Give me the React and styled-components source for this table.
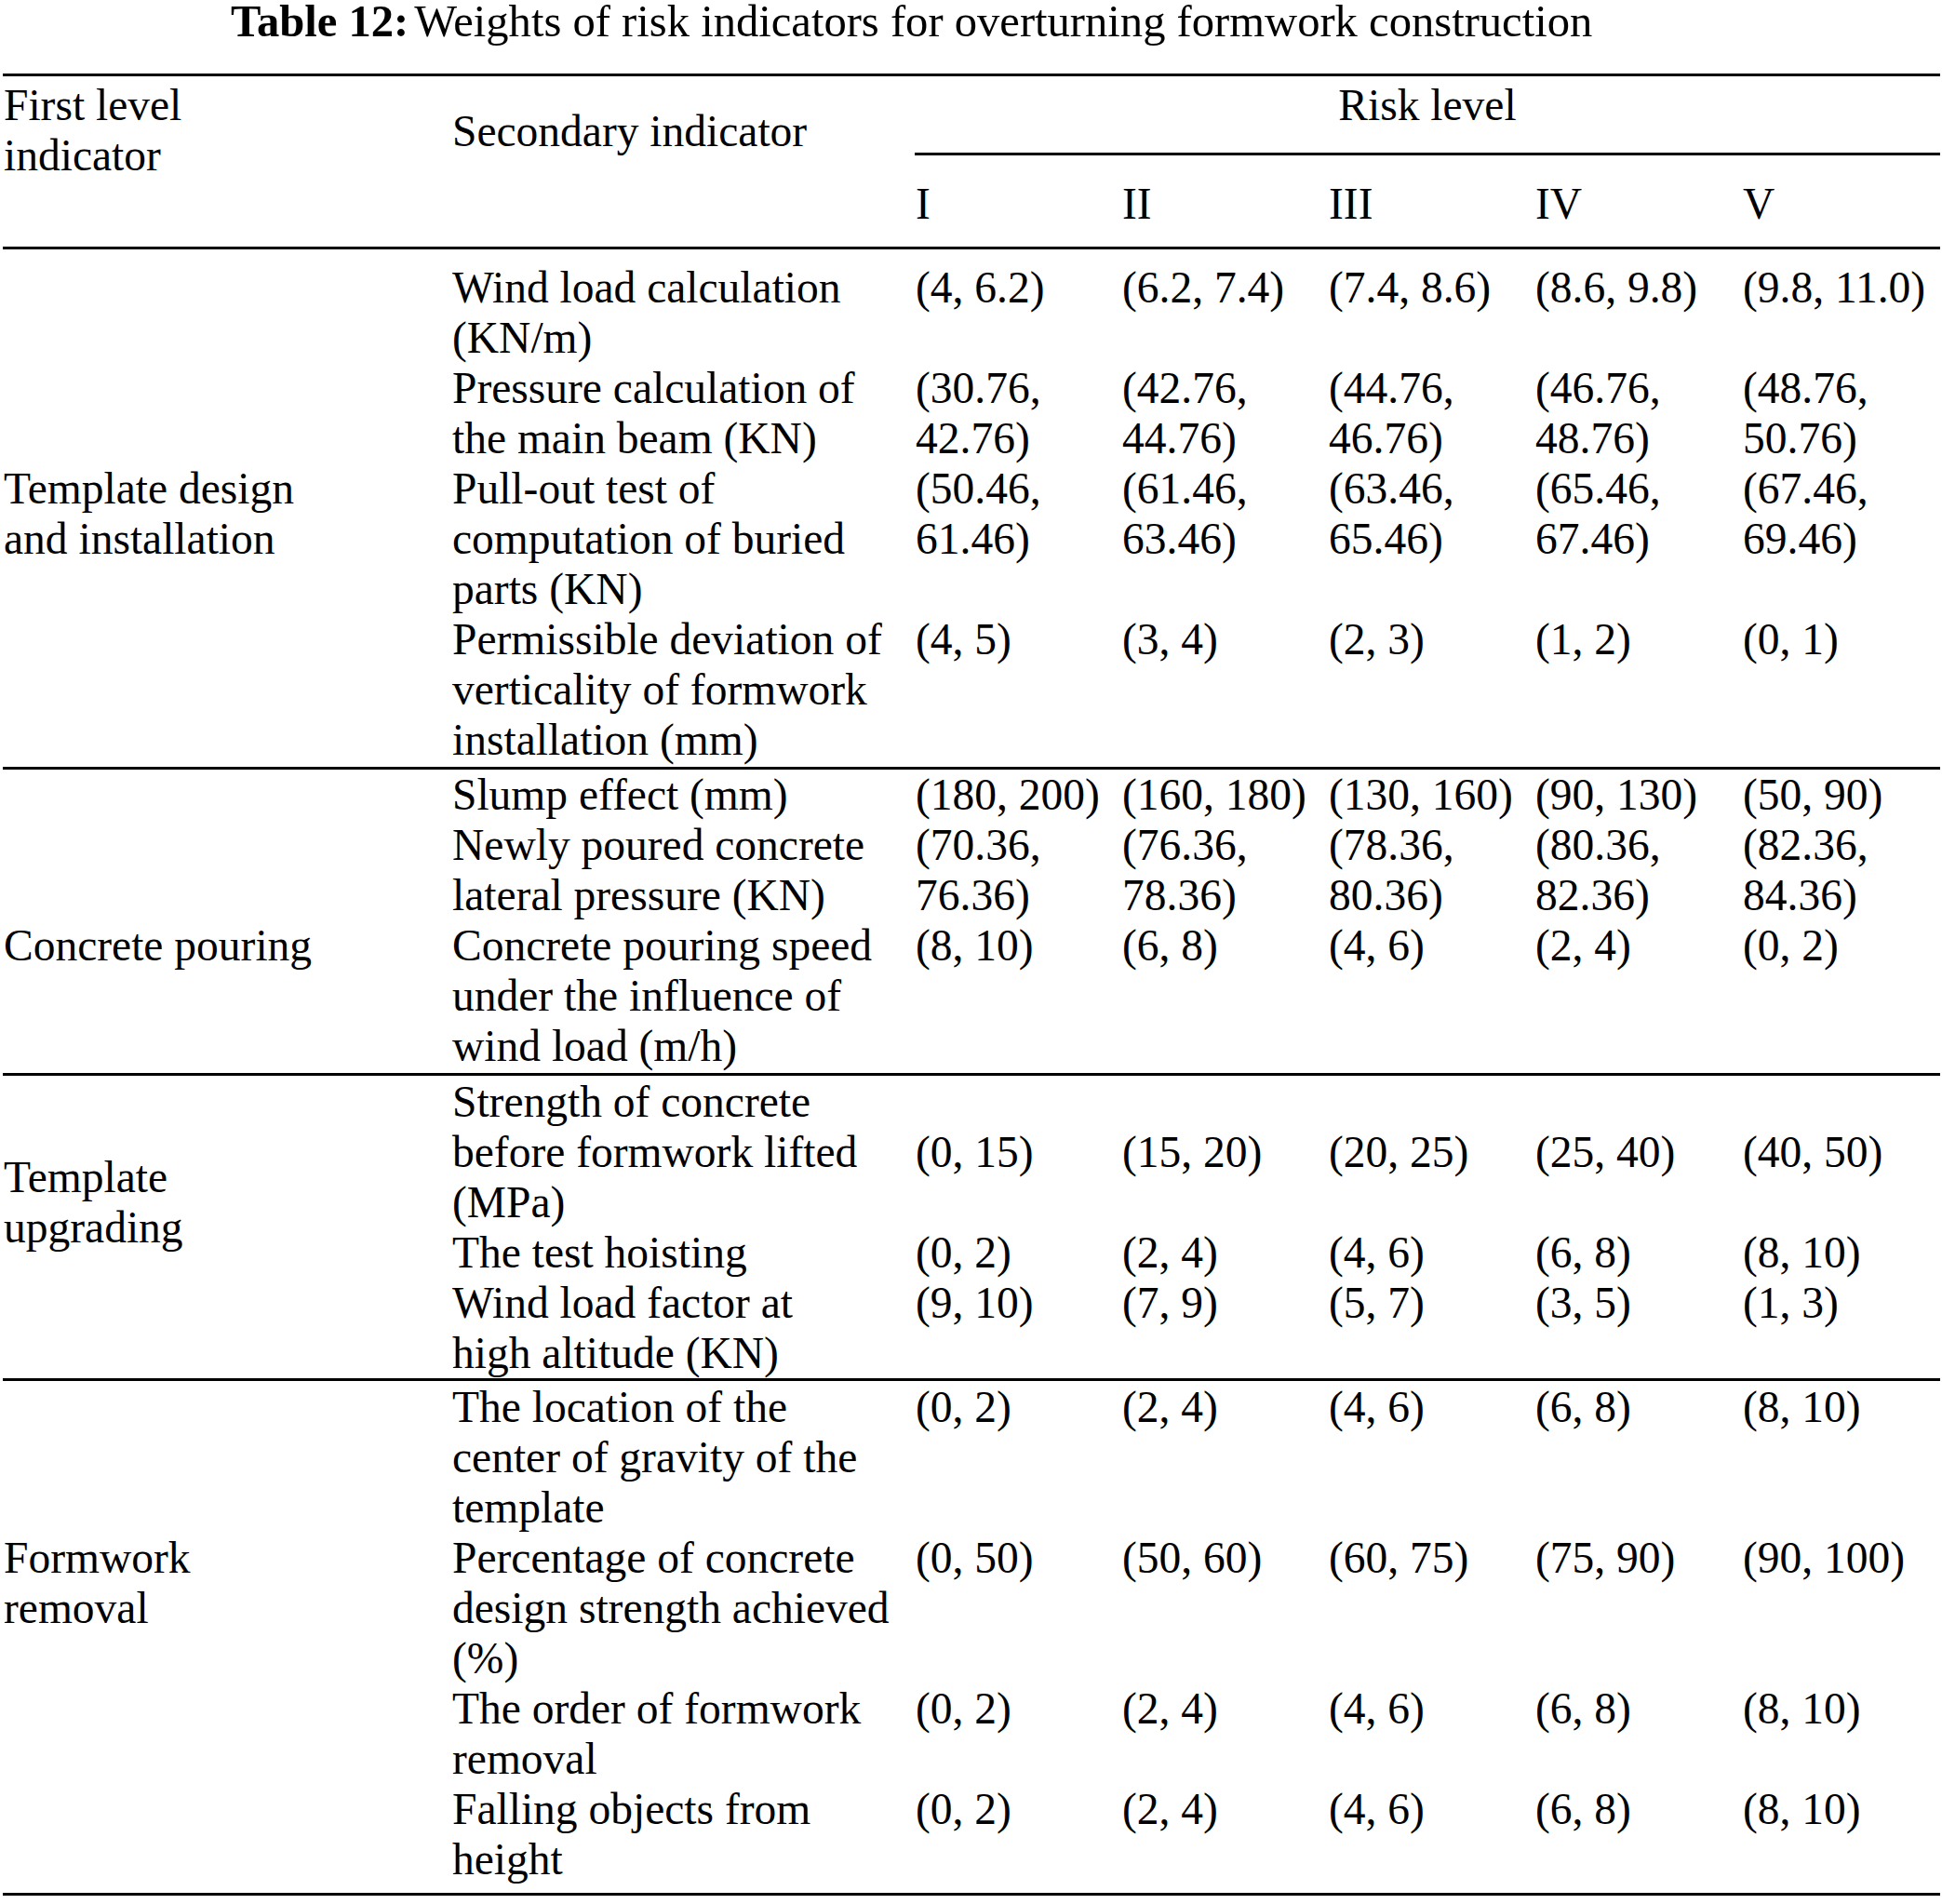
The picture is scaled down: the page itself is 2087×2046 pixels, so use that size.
import styled, { createGlobalStyle } from "styled-components";

const GlobalStyle = createGlobalStyle`
  body {
    margin: 0;
    background: #fff;
  }
`;

const groups = [
  {
    label: ["Template design", "and installation"],
    labelRow: 3,
    labelSpan: 1,
    labelOffset: 0,
    padTop: 14,
    padBottom: 2,
    rows: [
      {
        name: ["Wind load calculation", "(KN/m)"],
        values: [["(4, 6.2)"], ["(6.2, 7.4)"], ["(7.4, 8.6)"], ["(8.6, 9.8)"], ["(9.8, 11.0)"]],
      },
      {
        name: ["Pressure calculation of", "the main beam (KN)"],
        values: [
          ["(30.76,", "42.76)"],
          ["(42.76,", "44.76)"],
          ["(44.76,", "46.76)"],
          ["(46.76,", "48.76)"],
          ["(48.76,", "50.76)"],
        ],
      },
      {
        name: ["Pull-out test of", "computation of buried", "parts (KN)"],
        values: [
          ["(50.46,", "61.46)"],
          ["(61.46,", "63.46)"],
          ["(63.46,", "65.46)"],
          ["(65.46,", "67.46)"],
          ["(67.46,", "69.46)"],
        ],
      },
      {
        name: ["Permissible deviation of", "verticality of formwork", "installation (mm)"],
        values: [["(4, 5)"], ["(3, 4)"], ["(2, 3)"], ["(1, 2)"], ["(0, 1)"]],
      },
    ],
  },
  {
    label: ["Concrete pouring"],
    labelRow: 3,
    labelSpan: 1,
    labelOffset: 0,
    padTop: 0,
    padBottom: 2,
    rows: [
      {
        name: ["Slump effect (mm)"],
        values: [["(180, 200)"], ["(160, 180)"], ["(130, 160)"], ["(90, 130)"], ["(50, 90)"]],
      },
      {
        name: ["Newly poured concrete", "lateral pressure (KN)"],
        values: [
          ["(70.36,", "76.36)"],
          ["(76.36,", "78.36)"],
          ["(78.36,", "80.36)"],
          ["(80.36,", "82.36)"],
          ["(82.36,", "84.36)"],
        ],
      },
      {
        name: ["Concrete pouring speed", "under the influence of", "wind load (m/h)"],
        values: [["(8, 10)"], ["(6, 8)"], ["(4, 6)"], ["(2, 4)"], ["(0, 2)"]],
      },
    ],
  },
  {
    label: ["Template", "upgrading"],
    labelRow: 1,
    labelSpan: 2,
    labelOffset: 81,
    padTop: 1,
    padBottom: 0,
    rows: [
      {
        name: ["Strength of concrete", "before formwork lifted", "(MPa)"],
        values: [["(0, 15)"], ["(15, 20)"], ["(20, 25)"], ["(25, 40)"], ["(40, 50)"]],
        middle: true,
      },
      {
        name: ["The test hoisting"],
        values: [["(0, 2)"], ["(2, 4)"], ["(4, 6)"], ["(6, 8)"], ["(8, 10)"]],
      },
      {
        name: ["Wind load factor at", "high altitude (KN)"],
        values: [["(9, 10)"], ["(7, 9)"], ["(5, 7)"], ["(3, 5)"], ["(1, 3)"]],
      },
    ],
  },
  {
    label: ["Formwork", "removal"],
    labelRow: 2,
    labelSpan: 1,
    labelOffset: 0,
    padTop: 1,
    padBottom: 9,
    rows: [
      {
        name: ["The location of the", "center of gravity of the", "template"],
        values: [["(0, 2)"], ["(2, 4)"], ["(4, 6)"], ["(6, 8)"], ["(8, 10)"]],
      },
      {
        name: ["Percentage of concrete", "design strength achieved", "(%)"],
        values: [["(0, 50)"], ["(50, 60)"], ["(60, 75)"], ["(75, 90)"], ["(90, 100)"]],
      },
      {
        name: ["The order of formwork", "removal"],
        values: [["(0, 2)"], ["(2, 4)"], ["(4, 6)"], ["(6, 8)"], ["(8, 10)"]],
      },
      {
        name: ["Falling objects from", "height"],
        values: [["(0, 2)"], ["(2, 4)"], ["(4, 6)"], ["(6, 8)"], ["(8, 10)"]],
      },
    ],
  },
];

const levels = ["I", "II", "III", "IV", "V"];

function Lines({ lines }) {
  return lines.map((line) => <Line key={line}>{line}</Line>);
}

export default function App() {
  return (
    <>
      <GlobalStyle />
      <Page>
        <Caption>
          <CaptionLabel>Table 12:</CaptionLabel>
          Weights of risk indicators for overturning formwork construction
        </Caption>
        <Header>
          <HeadCell $row="1 / span 2" $col="1" $top={4}>
            <Lines lines={["First level", "indicator"]} />
          </HeadCell>
          <HeadCell $row="1 / span 2" $col="2" $top={32}>
            <Line>Secondary indicator</Line>
          </HeadCell>
          <RiskLevel>Risk level</RiskLevel>
          {levels.map((level, i) => (
            <HeadCell key={level} $row="2" $col={String(i + 3)} $top={25} $bottom={19}>
              <Line>{level}</Line>
            </HeadCell>
          ))}
        </Header>
        {groups.map((group) => (
          <Group key={group.label.join(" ")} $top={group.padTop} $bottom={group.padBottom}>
            <Label
              $row={group.labelRow}
              $span={group.labelSpan}
              $offset={group.labelOffset}
            >
              <Lines lines={group.label} />
            </Label>
            {group.rows.map((row, r) => (
              <Row key={row.name[0]}>
                <Indicator $row={r + 1}>
                  <Lines lines={row.name} />
                </Indicator>
                {row.values.map((value, c) => (
                  <Value key={c} $row={r + 1} $col={c + 3} $middle={row.middle}>
                    <Lines lines={value} />
                  </Value>
                ))}
              </Row>
            ))}
          </Group>
        ))}
      </Page>
    </>
  );
}

const columns = "482px 498px 222px 222px 222px 223px 1fr";

const Page = styled.div`
  width: 2082px;
  padding-left: 3px;
  font-family: "Liberation Serif", "Times New Roman", serif;
  font-size: 47.5px;
  line-height: 54px;
  color: #000;
`;

const Caption = styled.div`
  padding-left: 245px;
  font-size: 48.6px;
  line-height: 47px;
  margin-bottom: 32px;
  white-space: nowrap;
`;

const CaptionLabel = styled.span`
  font-weight: bold;
  margin-right: 6px;
`;

const Header = styled.div`
  display: grid;
  grid-template-columns: ${columns};
  border-top: 3px solid #000;
  border-bottom: 3px solid #000;
`;

const HeadCell = styled.div`
  grid-row: ${(p) => p.$row};
  grid-column: ${(p) => p.$col};
  padding: ${(p) => p.$top}px 0 ${(p) => p.$bottom || 0}px 1px;
`;

const RiskLevel = styled.div`
  grid-row: 1;
  grid-column: 3 / -1;
  text-align: center;
  padding: 4px 0 24px;
  border-bottom: 3px solid #000;
`;

const Group = styled.section`
  display: grid;
  grid-template-columns: ${columns};
  padding: ${(p) => p.$top}px 0 ${(p) => p.$bottom}px;
  border-bottom: 3px solid #000;
`;

const Row = styled.div`
  display: contents;
`;

const Label = styled.div`
  grid-column: 1;
  grid-row: ${(p) => p.$row} / span ${(p) => p.$span};
  align-self: start;
  padding: ${(p) => p.$offset}px 0 0 1px;
`;

const Indicator = styled.div`
  grid-column: 2;
  grid-row: ${(p) => p.$row};
  padding-left: 1px;
`;

const Value = styled.div`
  grid-column: ${(p) => p.$col};
  grid-row: ${(p) => p.$row};
  align-self: ${(p) => (p.$middle ? "center" : "start")};
  padding-left: 1px;
`;

const Line = styled.div`
  white-space: nowrap;
`;
